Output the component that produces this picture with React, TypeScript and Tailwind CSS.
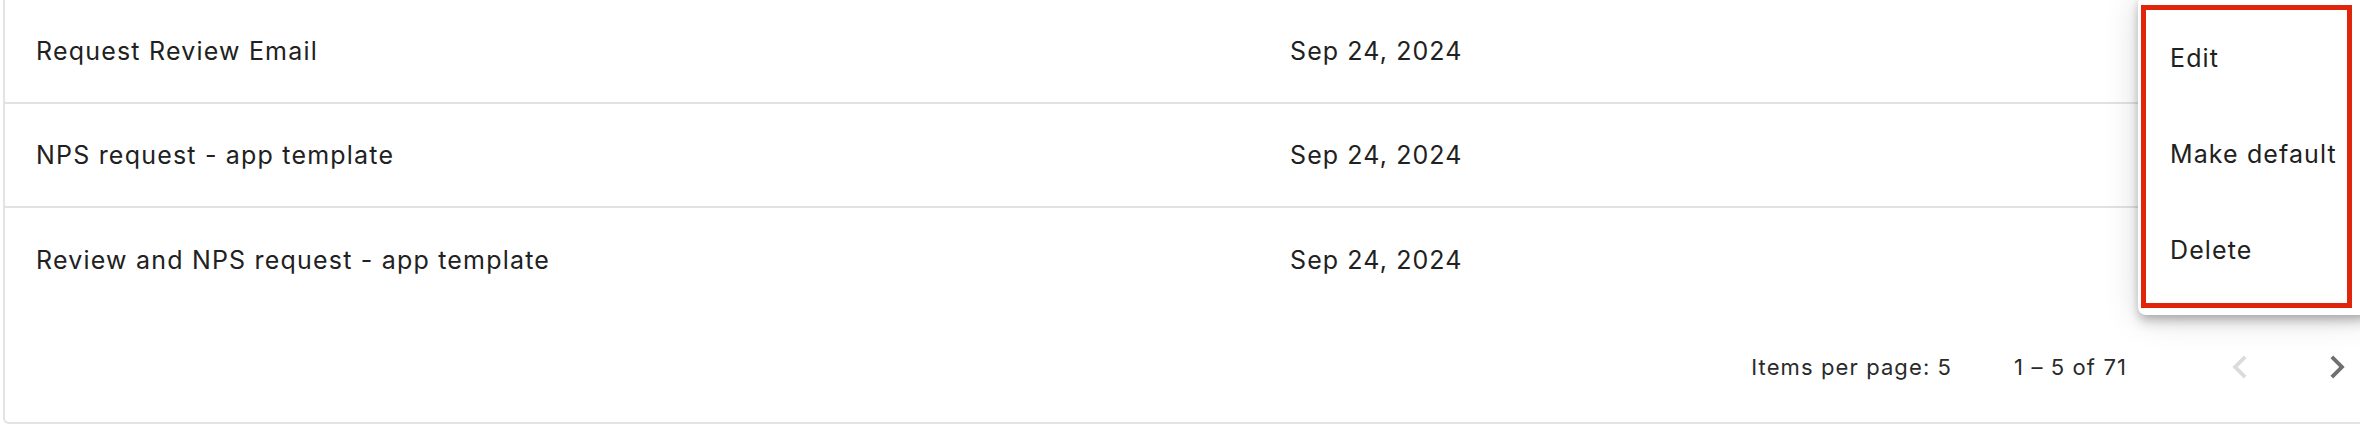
const rows = [
  { name: "Request Review Email", date: "Sep 24, 2024" },
  { name: "NPS request - app template", date: "Sep 24, 2024" },
  { name: "Review and NPS request - app template", date: "Sep 24, 2024" },
];

const menuItems = ["Edit", "Make default", "Delete"];

function Chevron({ dir, className }: { dir: "left" | "right"; className: string }) {
  return (
    <svg viewBox="0 0 24 24" className={className} fill="currentColor">
      {dir === "right" ? (
        <path d="M10 6L8.59 7.41 13.17 12l-4.58 4.59L10 18l6-6z" />
      ) : (
        <path d="M15.41 7.41L14 6l-6 6 6 6 1.41-1.41L10.83 12z" />
      )}
    </svg>
  );
}

export default function App() {
  return (
    <div className="relative h-[426px] w-[2360px] overflow-hidden bg-white font-['Inter','Liberation_Sans',sans-serif] text-[#212121]">
      {/* Table card */}
      <div className="ml-[3px] h-[424px] rounded-bl-[6px] border-b-2 border-l-2 border-[#e3e3e3]">
        {rows.map((row, i) => (
          <div
            key={row.name}
            className={
              "flex h-[104px] items-center pt-[2px] text-[25px] tracking-[1.2px] " +
              (i < rows.length - 1 ? "border-b-2 border-[#e2e2e2]" : "")
            }
          >
            <div className="w-[1285px] pl-[31px]">{row.name}</div>
            <div className="tracking-[1.1px]">{row.date}</div>
          </div>
        ))}

        {/* Paginator */}
        <div className="flex h-[110px] items-center justify-end text-[22px] tracking-[1.1px] text-[#2a2a2a]">
          <span>Items per page: 5</span>
          <span className="ml-[62px]">1 – 5 of 71</span>
          <Chevron dir="left" className="ml-[90px] h-[46px] w-[46px] text-[#dcdcdc]" />
          <Chevron dir="right" className="ml-[51px] h-[46px] w-[46px] text-[#6f6f6f]" />
        </div>
      </div>

      {/* Row actions menu */}
      <div className="absolute left-[2138px] top-[-5px] w-[232px] rounded-[8px] bg-white py-[16px] shadow-[0_4px_8px_-2px_rgba(0,0,0,0.2),0_8px_12px_0_rgba(0,0,0,0.14),0_2px_36px_0_rgba(0,0,0,0.14)]">
        {menuItems.map((item) => (
          <div key={item} className="flex h-[96px] items-center px-[32px] text-[25px] tracking-[1.1px]">
            {item}
          </div>
        ))}
      </div>
      <div className="absolute left-[2141px] top-[5px] h-[303px] w-[211px] border-[5px] border-[#e1250b]" />
    </div>
  );
}
